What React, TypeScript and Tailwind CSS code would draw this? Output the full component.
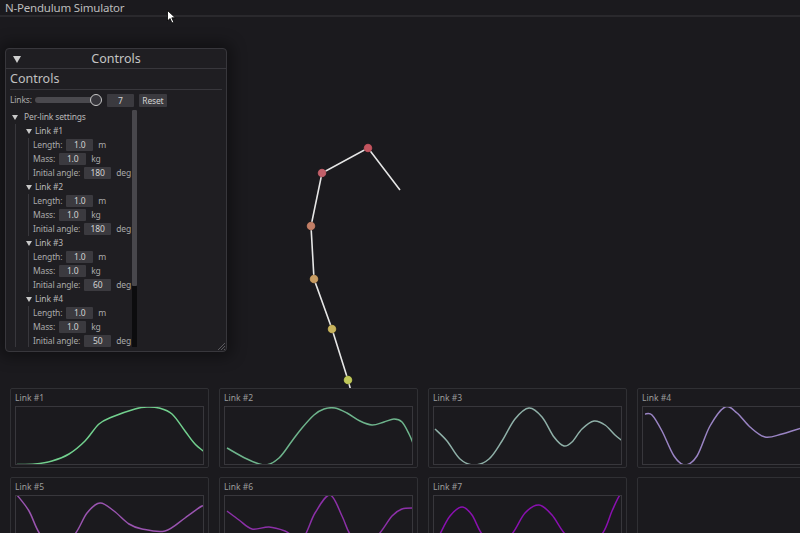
import React from "react";

type Pt = number[];

const toPath = (p: Pt[]) => {
  let d = `M${p[0][0]},${p[0][1]}`;
  for (let i = 0; i < p.length - 1; i++) {
    const p0 = p[i - 1] || p[i];
    const p1 = p[i];
    const p2 = p[i + 1];
    const p3 = p[i + 2] || p2;
    const c1x = p1[0] + (p2[0] - p0[0]) / 6;
    const c1y = p1[1] + (p2[1] - p0[1]) / 6;
    const c2x = p2[0] - (p3[0] - p1[0]) / 6;
    const c2y = p2[1] - (p3[1] - p1[1]) / 6;
    d += ` C${c1x},${c1y} ${c2x},${c2y} ${p2[0]},${p2[1]}`;
  }
  return d;
};

const plots: { name: string; color: string; box: [number, number]; pts: Pt[] }[] = [
  {
    name: "Link #1",
    color: "#72d08e",
    box: [14, 406],
    pts: [[15, 463.5], [33, 463], [50, 460], [67, 453], [83, 440], [97, 423], [110, 416], [133, 408], [145, 406], [157, 407], [170, 413], [183, 430], [193, 443], [205, 453]],
  },
  {
    name: "Link #2",
    color: "#6eb48c",
    box: [223, 406],
    pts: [[225, 447], [245, 458], [263, 464], [277, 457], [290, 440], [300, 427], [312, 414], [322, 408], [333, 407], [345, 412], [358, 420], [370, 424], [382, 421], [392, 418], [400, 421], [407, 433], [413, 447]],
  },
  {
    name: "Link #3",
    color: "#8fb0a8",
    box: [432, 406],
    pts: [[433, 428], [445, 440], [458, 458], [472, 464], [487, 458], [500, 440], [513, 418], [527, 407], [540, 416], [552, 436], [562, 445], [570, 441], [580, 428], [592, 420], [603, 424], [613, 434], [623, 442]],
  },
  {
    name: "Link #4",
    color: "#9a84c4",
    box: [641, 406],
    pts: [[643, 413], [650, 414], [660, 430], [672, 455], [683, 464], [695, 455], [708, 425], [723, 406], [735, 412], [748, 426], [763, 436], [780, 433], [800, 427], [830, 420]],
  },
  {
    name: "Link #5",
    color: "#9a54b0",
    box: [14, 495],
    pts: [[15, 494], [27, 510], [38, 533], [55, 548], [73, 533], [85, 512], [98, 502], [112, 510], [127, 523], [140, 528], [163, 530], [183, 517], [200, 505], [205, 507]],
  },
  {
    name: "Link #6",
    color: "#8c30a8",
    box: [223, 495],
    pts: [[225, 510], [237, 519], [250, 528], [267, 526], [283, 530], [300, 538], [313, 512], [328, 494], [340, 515], [348, 533], [362, 545], [377, 533], [390, 515], [400, 508], [413, 507]],
  },
  {
    name: "Link #7",
    color: "#8a10b0",
    box: [432, 495],
    pts: [[438, 533], [448, 515], [460, 506], [470, 514], [480, 533], [495, 545], [510, 533], [523, 512], [537, 504], [550, 514], [563, 533], [580, 545], [600, 533], [610, 510], [618, 494], [623, 495]],
  },
];

const joints: Pt[] = [[400, 190], [368, 148], [322, 173], [311, 226], [314, 279], [332, 329], [348, 380], [362, 432]];
const ballColors = ["#c2545f", "#c2606a", "#c27e66", "#c89c62", "#c8b35c", "#c0c85a", "#a8c85a"];

const Field = ({ label, value, unit }: { label: string; value: string; unit: string }) => (
  <div className="flex items-center h-[14px] whitespace-nowrap">
    <span>{label}</span>
    <span className="ml-[4px] w-[27px] h-[12px] bg-[#3b3a3f] rounded-[1px] text-center leading-[12px] text-[#d2d2d2]">{value}</span>
    <span className="ml-[5px]">{unit}</span>
  </div>
);

const Tri = ({ cls }: { cls: string }) => (
  <svg width="6" height="5" viewBox="0 0 6 5" className={cls}>
    <path d="M0,0 L6,0 L3,5 Z" fill="#c8c8c8" />
  </svg>
);

const links = [
  { n: 1, angle: "180" },
  { n: 2, angle: "180" },
  { n: 3, angle: "60" },
  { n: 4, angle: "50" },
  { n: 5, angle: "40" },
];

export default function App() {
  return (
    <div
      className="relative w-[800px] h-[533px] overflow-hidden bg-[#1b1a1e] text-[#b4b4b4]"
      style={{ fontFamily: '"Noto Sans", "Open Sans", sans-serif' }}
    >
      {/* title bar */}
      <div className="h-[17px] border-b-[2px] border-[#2a292d] flex items-center px-[5px]">
        <span className="text-[11.5px] leading-[14px] text-[#bcbcbc] tracking-[-0.2px]">N-Pendulum Simulator</span>
      </div>

      {/* canvas region */}
      <div className="relative h-[371px]">
        <svg className="absolute left-0 top-[-17px]" width="800" height="388" viewBox="0 0 800 388">
          <polyline
            points={joints.map((p) => p.join(",")).join(" ")}
            fill="none"
            stroke="#e6e6e6"
            strokeWidth="1.6"
          />
          {joints.slice(1).map((p, i) => (
            <circle key={i} cx={p[0]} cy={p[1]} r="4.3" fill={ballColors[i]} stroke="rgba(0,0,0,0.25)" strokeWidth="0.8" />
          ))}
        </svg>
      </div>

      {/* plot grid */}
      <div className="relative pl-[10px] grid grid-cols-[repeat(4,199px)] gap-x-[10px] gap-y-[9px]">
        {plots.map((p) => (
          <div key={p.name} className="h-[80px] border border-[#303034] rounded-[2px] bg-[#1b1a1e] px-[4px] pt-[3px]">
            <div className="text-[8.5px] leading-[12px] text-[#9c9c9c] h-[14px] whitespace-nowrap">{p.name}</div>
            <div className="h-[59px] border border-[#38373c] overflow-hidden">
              <svg width="191" height="59" viewBox={`${p.box[0]} ${p.box[1]} 191 59`} className="block">
                <path d={toPath(p.pts)} fill="none" stroke={p.color} strokeWidth="1.5" />
              </svg>
            </div>
          </div>
        ))}
        <div className="h-[80px] border border-[#303034] rounded-[2px] bg-[#1b1a1e]" />
      </div>

      {/* floating controls window */}
      <div className="absolute left-[5px] top-[48px] w-[222px] h-[304px] rounded-[4px] border border-[#38373c] bg-[#1f1e22] shadow-[0_0_14px_6px_rgba(0,0,0,0.35)] flex flex-col">
        <div className="relative h-[20px] border-b border-[#38373c] flex items-center justify-center">
          <svg width="8" height="7" viewBox="0 0 8 7" className="absolute left-[7px] top-[7px]">
            <path d="M0,0 L8,0 L4,7 Z" fill="#d0d0d0" />
          </svg>
          <span className="text-[12.5px] leading-[16px] text-[#c4c4c4]">Controls</span>
        </div>
        <div className="px-[4px] flex flex-col text-[8.5px] tracking-[-0.15px] leading-[12px] text-[#aaaaaa] whitespace-nowrap">
          <div className="h-[21px] border-b border-[#38373c] flex items-center">
            <span className="text-[12.5px] leading-[16px] tracking-normal text-[#c0c0c0]">Controls</span>
          </div>
          <div className="h-[18px] flex items-center pt-[2px]">
            <span>Links:</span>
            <div className="relative ml-[3px] w-[67px] h-[6px]">
              <div className="absolute left-0 top-0 w-[62px] h-[6px] rounded-full bg-[#4a494e]" />
              <div className="absolute left-[55px] top-[-3px] w-[12px] h-[12px] rounded-full border-[1.5px] border-[#c8c8c8] bg-[#35343a]" />
            </div>
            <span className="ml-[5px] w-[27px] h-[13px] bg-[#3b3a3f] rounded-[1px] text-center leading-[13px] text-[#d2d2d2]">7</span>
            <span className="ml-[5px] w-[28px] h-[13px] bg-[#3b3a3f] rounded-[1px] text-center leading-[13px] text-[#d2d2d2]">Reset</span>
          </div>
          <div className="mt-[2px] h-[237px] flex">
            <div className="w-[122px] h-[237px] overflow-hidden">
              <div className="flex items-center h-[14px]">
                <Tri cls="ml-[2px] mr-[6px]" />
                <span className="text-[#b8b8b8]">Per-link settings</span>
              </div>
              <div className="ml-[5px] border-l border-[#38373c] pl-[10px] h-[300px]">
                {links.map((l) => (
                  <div key={l.n}>
                    <div className="flex items-center h-[14px]">
                      <Tri cls="mr-[3px]" />
                      <span className="text-[#b8b8b8]">Link #{l.n}</span>
                    </div>
                    <div className="ml-[2px] border-l border-[#38373c] pl-[4px]">
                      <Field label="Length:" value="1.0" unit="m" />
                      <Field label="Mass:" value="1.0" unit="kg" />
                      <Field label="Initial angle:" value={l.angle} unit="deg" />
                    </div>
                  </div>
                ))}
              </div>
            </div>
            <div className="w-[5px] h-[237px] bg-[#0c0c0e] flex flex-col">
              <div className="h-[176px] bg-[#48474c] rounded-[1px]" />
            </div>
          </div>
        </div>
        <svg width="8" height="8" viewBox="0 0 8 8" className="absolute right-[1px] bottom-[1px]">
          <path d="M8,1 L1,8 M8,4 L4,8 M8,7 L7,8" stroke="#5a595e" strokeWidth="1" />
        </svg>
      </div>

      {/* mouse cursor */}
      <svg width="10" height="14" viewBox="0 0 10 14" className="absolute left-[167px] top-[10px]">
        <path d="M0.5,0.5 L0.5,11 L3,8.5 L5,13 L6.8,12.2 L4.8,7.8 L8.3,7.8 Z" fill="#ffffff" stroke="#000000" strokeWidth="0.8" />
      </svg>
    </div>
  );
}
